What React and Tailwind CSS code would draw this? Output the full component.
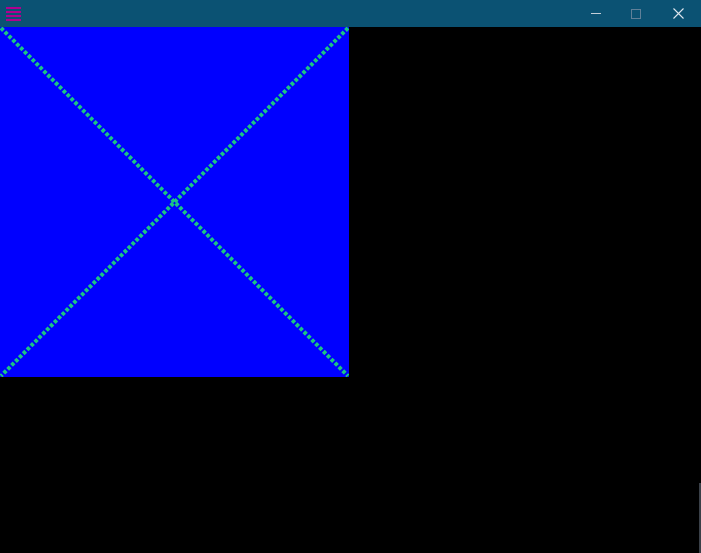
import React from "react";

export default function App() {
  return (
    <div className="w-[701px] h-[553px] bg-black flex flex-col overflow-hidden" style={{ fontFamily: '"Liberation Sans", sans-serif' }}>
      <div className="h-[27px] bg-[#0b5273] flex items-center shrink-0">
        <div className="ml-[6px] w-[15px] flex flex-col gap-[2px]">
          <div className="h-[2px] bg-[#b0008f]" />
          <div className="h-[2px] bg-[#b0008f]" />
          <div className="h-[2px] bg-[#b0008f]" />
          <div className="h-[2px] bg-[#b0008f]" />
        </div>
        <div className="ml-auto flex items-center h-full">
          <div className="w-[40px] h-full flex items-center justify-center">
            <div className="w-[10px] h-[1px] bg-[#c3ced8]" />
          </div>
          <div className="w-[40px] h-full flex items-center justify-center">
            <div className="w-[10px] h-[10px] border border-[#5f8098]" />
          </div>
          <div className="w-[44px] h-full flex items-center justify-center mr-[1px]">
            <svg width="11" height="11" viewBox="0 0 11 11">
              <path d="M0.5 0.5 L10.5 10.5 M10.5 0.5 L0.5 10.5" stroke="#dde6ee" strokeWidth="1.1" />
            </svg>
          </div>
        </div>
      </div>
      <div className="flex-1 flex">
        <div className="flex flex-col">
          <div className="w-[349px] h-[350px] bg-[#0000ff]">
            <svg width="349" height="350" viewBox="0 0 349 350">
              <line x1="1" y1="1" x2="348" y2="349" stroke="#1cc484" strokeWidth="4" strokeDasharray="3.5 2" />
              <line x1="348" y1="1" x2="1" y2="349" stroke="#1cc484" strokeWidth="4" strokeDasharray="3.5 2" />
            </svg>
          </div>
        </div>
        <div className="flex-1" />
        <div className="w-[2px] flex flex-col">
          <div className="flex-1" />
          <div className="h-[70px] bg-[#3a4048]" />
        </div>
      </div>
    </div>
  );
}
